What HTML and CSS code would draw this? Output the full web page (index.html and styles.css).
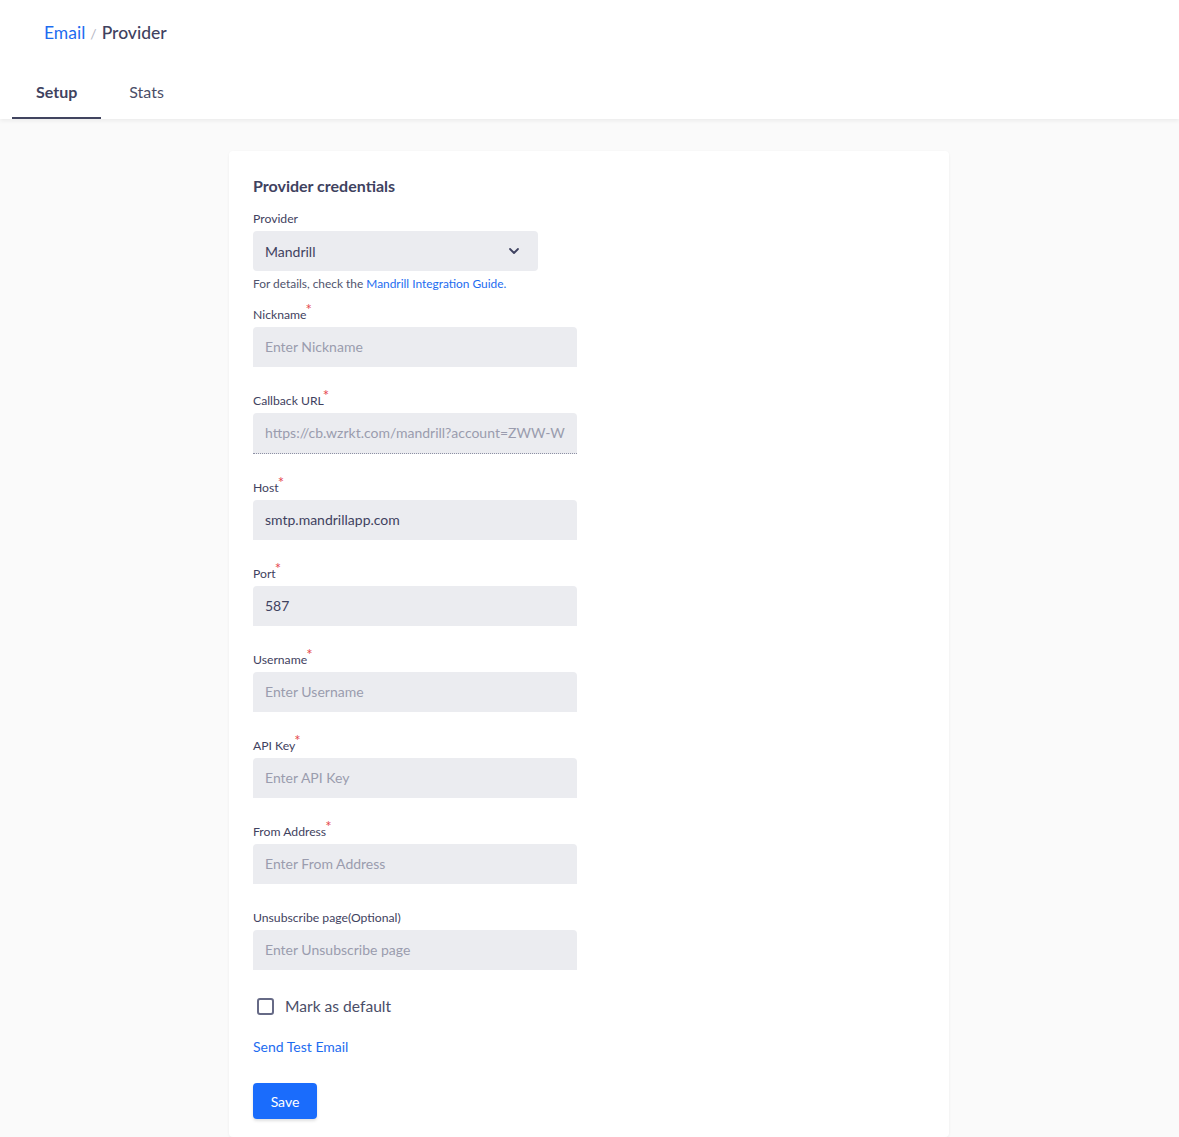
FILE: index.html
```html
<!DOCTYPE html>
<html>
<head>
<meta charset="utf-8">
<link rel="stylesheet" href="styles.css">
</head>
<body>
<header class="header">
  <div class="crumbs"><a class="crumb-link">Email</a><span class="sep">/</span><span class="crumb-cur">Provider</span></div>
  <nav class="tabs">
    <div class="tab active">Setup</div>
    <div class="tab">Stats</div>
  </nav>
</header>
<main class="main">
  <section class="card">
    <h2 class="title">Provider credentials</h2>
    <div class="field first">
      <label class="label">Provider</label>
      <div class="select">
        <span>Mandrill</span>
        <svg class="chev" width="12" height="8" viewBox="0 0 12 8"><path d="M2 2l4 4 4-4" fill="none" stroke="#3f4260" stroke-width="1.8" stroke-linecap="round" stroke-linejoin="round"/></svg>
      </div>
      <div class="help">For details, check the <a class="link">Mandrill Integration Guide.</a></div>
    </div>
    <div class="field">
      <label class="label">Nickname<span class="req">*</span></label>
      <div class="input placeholder"><span class="val">Enter Nickname</span></div>
    </div>
    <div class="field">
      <label class="label">Callback URL<span class="req">*</span></label>
      <div class="input disabled"><span class="val">https://cb.wzrkt.com/mandrill?account=ZWW-WWW-WWWW</span></div>
    </div>
    <div class="field">
      <label class="label">Host<span class="req">*</span></label>
      <div class="input"><span class="val">smtp.mandrillapp.com</span></div>
    </div>
    <div class="field">
      <label class="label">Port<span class="req">*</span></label>
      <div class="input"><span class="val">587</span></div>
    </div>
    <div class="field">
      <label class="label">Username<span class="req">*</span></label>
      <div class="input placeholder"><span class="val">Enter Username</span></div>
    </div>
    <div class="field">
      <label class="label">API Key<span class="req">*</span></label>
      <div class="input placeholder"><span class="val">Enter API Key</span></div>
    </div>
    <div class="field">
      <label class="label">From Address<span class="req">*</span></label>
      <div class="input placeholder"><span class="val">Enter From Address</span></div>
    </div>
    <div class="field last">
      <label class="label">Unsubscribe page(Optional)</label>
      <div class="input placeholder"><span class="val">Enter Unsubscribe page</span></div>
    </div>
    <div class="check-row">
      <span class="checkbox"></span>
      <span class="check-label">Mark as default</span>
    </div>
    <a class="test-link">Send Test Email</a>
    <button class="save">Save</button>
  </section>
</main>
</body>
</html>
```
FILE: styles.css
```css
* { box-sizing: border-box; }
html, body { margin: 0; padding: 0; }
body {
  font-family: "Lato", "Liberation Sans", sans-serif;
  color: #3f4260;
  background: #fafafa;
  min-height: 1137px;
}
.header {
  background: #fff;
  height: 119px;
  box-shadow: 0 2px 4px rgba(0,0,0,0.06);
  position: relative;
  z-index: 1;
  padding-top: 22px;
}
.crumbs {
  padding-left: 44px;
  font-size: 17.5px;
  height: 22px;
  line-height: 22px;
}
.crumb-link { color: #1d6cf0; }
.sep { color: #b4b6c4; margin: 0 5px; font-size: 14px; }
.crumb-cur { color: #3f4260; font-weight: 500; }
.tabs {
  display: flex;
  gap: 4px;
  margin-top: 26px;
  padding-left: 12px;
}
.tab {
  height: 49px;
  line-height: 44px;
  font-size: 16px;
  padding: 0 24px;
  color: #4b4e68;
}
.tab.active {
  font-weight: 700;
  border-bottom: 2px solid #41445f;
  color: #3f4260;
}
.main {
  padding: 32px 0 0 229px;
}
.card {
  width: 720px;
  background: #fff;
  border-radius: 4px;
  box-shadow: 0 1px 3px rgba(0,0,0,0.06);
  padding: 26px 24px 18px;
  min-height: 986px;
}
.title {
  margin: 0 0 16px;
  font-size: 16px;
  font-weight: 700;
  color: #3f4260;
  line-height: 18px;
}
.field { margin-bottom: 26px; }
.field.first { margin-bottom: 17px; }
.field.last { margin-bottom: 24px; }
.label {
  display: block;
  font-size: 12.2px;
  line-height: 16px;
  height: 16px;
  margin-bottom: 4px;
  color: #3f4260;
}
.req {
  color: #e5484d;
  font-size: 15px;
  line-height: 10px;
  position: relative;
  top: -4px;
  margin-left: -1px;
}
.select {
  width: 285px;
  height: 40px;
  background: #ebecf0;
  border-radius: 4px;
  display: flex;
  align-items: center;
  justify-content: space-between;
  padding: 0 18px 0 12px;
  font-size: 14px;
}
.help {
  margin-top: 7px;
  font-size: 11.9px;
  line-height: 12px;
  color: #50536d;
}
.link { color: #1d6cf0; }
.input {
  width: 324px;
  height: 40px;
  line-height: 40px;
  background: #ebecf0;
  border-radius: 4px 4px 0 0;
  padding: 0 12px;
  font-size: 14px;
  color: #3f4260;
}
.val {
  display: block;
  white-space: nowrap;
  overflow: hidden;
}
.input.placeholder { color: #9a9cae; }
.input.disabled {
  color: #9a9cae;
  border-bottom: 1px dotted #8d90a4;
  height: 41px;
}
.check-row {
  display: flex;
  align-items: center;
  height: 24px;
  padding-left: 4px;
}
.checkbox {
  width: 17px;
  height: 17px;
  border: 2px solid #666a86;
  border-radius: 3px;
  margin-right: 11px;
}
.check-label { font-size: 15.6px; color: #4b4e68; }
.test-link {
  display: block;
  margin-top: 21px;
  font-size: 14px;
  color: #1d6cf0;
  line-height: 16px;
}
.save {
  display: block;
  margin-top: 28px;
  width: 64px;
  height: 36px;
  background: #1a6cfc;
  color: #fff;
  border: none;
  border-radius: 4px;
  font-family: inherit;
  font-size: 14px;
  box-shadow: 0 2px 3px rgba(0,0,0,0.12);
}
```
